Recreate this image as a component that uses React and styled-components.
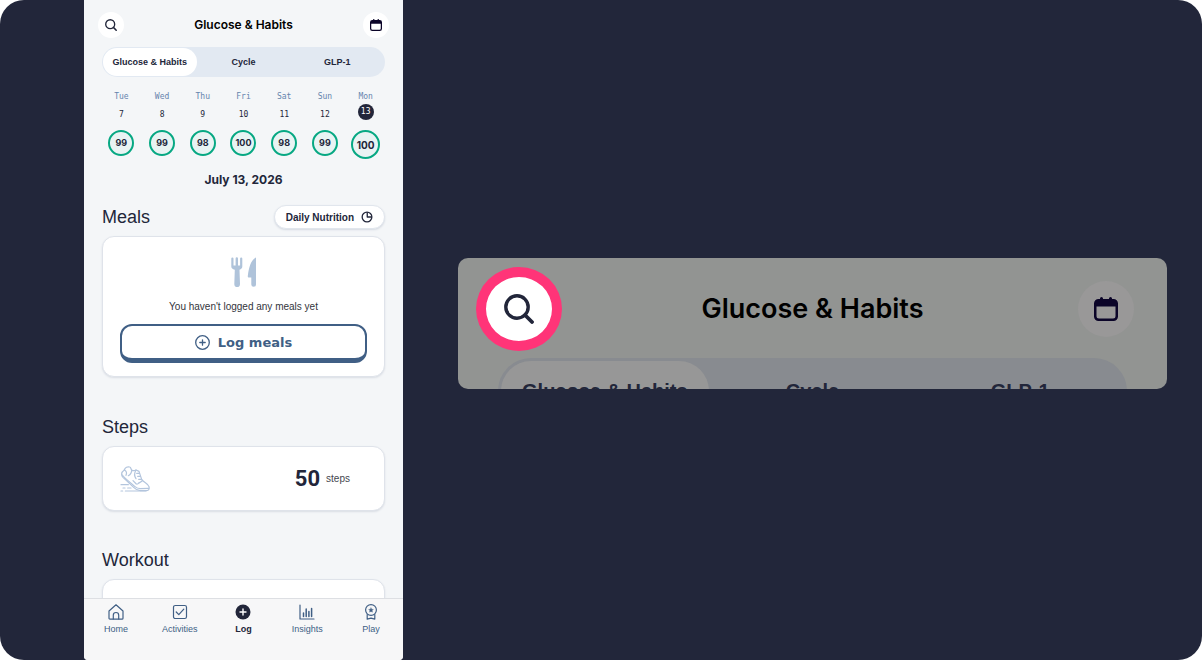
import { Fragment } from "react";
import styled, { createGlobalStyle } from "styled-components";

const GlobalStyle = createGlobalStyle`
  * {
    box-sizing: border-box;
  }
  body {
    margin: 0;
    background: #fff;
    font-family: "Liberation Sans", Arial, sans-serif;
    color: #22263a;
  }
  button {
    font: inherit;
    color: inherit;
    border: none;
    padding: 0;
    cursor: pointer;
  }
  h1, h2, p {
    margin: 0;
  }
  svg {
    display: block;
    flex: none;
  }
`;
const Stage = styled.main`
  display: grid;
  grid-template-columns: minmax(280px, 319px) 1fr;
  gap: 55px;
  height: 100vh;
  padding: 0 35px 0 84px;
  background: #22263a;
  border-radius: 24px;
  overflow: hidden;
`;
const Phone = styled.section`
  display: flex;
  flex-direction: column;
  min-height: 0;
  background: #f4f6f8;
  border-radius: 0 0 4px 4px;
  overflow: hidden;
`;
const Screen = styled.div`
  flex: 1;
  min-height: 0;
  overflow: hidden;
`;
const TopBar = styled.header`
  display: grid;
  grid-template-columns: 1fr auto 1fr;
  align-items: center;
  padding: ${(p) => (p.$large ? "9px 18px 0" : "12px 14px 9px")};
`;
const Title = styled.h1`
  font-family: Inter, sans-serif;
  font-size: ${(p) => (p.$large ? 27 : 12)}px;
  line-height: ${(p) => (p.$large ? 34 : 16)}px;
  font-weight: 600;
  color: #000;
`;
const RoundButton = styled.button`
  display: flex;
  align-items: center;
  justify-content: center;
  width: 26px;
  height: 26px;
  border-radius: 50%;
  background: #fff;
`;
const CalendarButton = styled(RoundButton)`
  justify-self: end;
  ${(p) =>
    p.$large &&
    `
    width: 56px;
    height: 56px;
    margin-right: 15px;
    background: #999898;
  `}
`;
const RingButton = styled(RoundButton)`
  width: 86px;
  height: 84px;
  border: 10px solid #ff3478;
`;
const Segments = styled.div`
  display: grid;
  grid-template-columns: repeat(3, 1fr);
  height: ${(p) => (p.$large ? 66 : 30)}px;
  margin: ${(p) => (p.$large ? "7px 40px 0" : "0 18px")};
  padding: ${(p) => (p.$large ? 3 : 1)}px;
  border-radius: 33px;
  background: ${(p) => (p.$large ? "#888b90" : "#e2e9f2")};
`;
const Segment = styled.button`
  border-radius: 33px;
  background: ${(p) => (p.$active ? (p.$large ? "#979797" : "#fff") : "transparent")};
  font-size: ${(p) => (p.$large ? 20 : 9)}px;
  font-weight: 700;
  white-space: nowrap;
`;
const Week = styled.div`
  display: grid;
  grid-template-columns: repeat(7, 1fr);
  padding: 15px 17px 0;
`;
const Day = styled.button`
  display: flex;
  flex-direction: column;
  align-items: center;
  height: 68px;
  background: none;
  font-family: "DejaVu Sans Mono", monospace;
  font-size: 8px;
  line-height: 10px;
`;
const DayName = styled.span`
  color: #6484ad;
`;
const DayNumber = styled.span`
  display: flex;
  align-items: center;
  justify-content: center;
  width: 16px;
  height: 16px;
  margin: ${(p) => (p.$active ? "2px 0 10px" : "5px 0 7px")};
  border-radius: 50%;
  color: ${(p) => (p.$active ? "#fff" : "#22263a")};
  background: ${(p) => (p.$active ? "#22263a" : "transparent")};
`;
const Score = styled.span`
  display: flex;
  align-items: center;
  justify-content: center;
  width: ${(p) => (p.$active ? 29 : 26)}px;
  height: ${(p) => (p.$active ? 29 : 26)}px;
  border: 2px solid #07a883;
  border-radius: 50%;
  background: #e9f3f3;
  font-family: Inter, sans-serif;
  font-size: ${(p) => (p.$active ? 10 : 9)}px;
  font-weight: 700;
`;
const DateLine = styled.p`
  margin-top: 12px;
  text-align: center;
  font-family: Inter, sans-serif;
  font-size: 12px;
  line-height: 16px;
  font-weight: 700;
`;
const Section = styled.section`
  padding: 0 18px;
  margin-top: ${(p) => p.$top}px;
`;
const SectionHead = styled.div`
  display: flex;
  align-items: center;
  justify-content: space-between;
  height: 24px;
  margin-bottom: 7px;
`;
const Heading = styled.h2`
  font-size: 18px;
  line-height: 24px;
  font-weight: 400;
`;
const Pill = styled.button`
  display: flex;
  align-items: center;
  gap: 7px;
  height: 24px;
  padding: 0 11px;
  border: 1px solid #e1e6ed;
  border-radius: 12px;
  background: #fff;
  box-shadow: 0 1px 2px #d5dae2;
  font-size: 10px;
  font-weight: 700;
`;
const Card = styled.div`
  border: 1px solid #dfe3ea;
  border-radius: 12px;
  background: #fff;
  box-shadow: 0 1px 2px #d9dde4;
`;
const MealsCard = styled(Card)`
  display: flex;
  flex-direction: column;
  align-items: center;
  padding: 20px 17px 13px;
`;
const StepsCard = styled(Card)`
  display: flex;
  align-items: center;
  height: 65px;
  padding: 0 34px 0 17px;
`;
const WorkoutCard = styled(Card)`
  height: 65px;
`;
const Note = styled.p`
  margin: 13px 0 10px;
  font-size: 10px;
  line-height: 14px;
  color: #33353c;
`;
const LogButton = styled.button`
  display: flex;
  align-items: center;
  justify-content: center;
  gap: 8px;
  width: 100%;
  height: 39px;
  border: 2px solid #405f85;
  border-bottom-width: 5px;
  border-radius: 12px;
  background: #fff;
  color: #405f85;
  font-family: "DejaVu Sans", sans-serif;
  font-size: 13px;
  font-weight: 700;
`;
const StepCount = styled.strong`
  margin-left: auto;
  font-family: Roboto, sans-serif;
  font-size: 22px;
  line-height: 28px;
`;
const StepUnit = styled.span`
  margin-left: 6px;
  font-size: 10px;
  color: #44464e;
`;
const TabBar = styled.nav`
  display: grid;
  grid-template-columns: repeat(5, 1fr);
  height: 62px;
  border-top: 1px solid #dddfe3;
  background: #f7f7f8;
`;
const Tab = styled.a`
  display: flex;
  flex-direction: column;
  align-items: center;
  gap: 4px;
  padding-top: 5px;
  color: ${(p) => (p.$active ? "#22263a" : "#405f85")};
  font-size: 9px;
  line-height: 10px;
  font-weight: ${(p) => (p.$active ? 700 : 400)};
  text-decoration: none;
`;
const CloseUp = styled.section`
  align-self: center;
  height: 131px;
  margin-bottom: 13px;
  border-radius: 10px;
  background: #929492;
  overflow: hidden;
`;

const SearchIcon = ({ size }) => (
  <svg width={size} height={size} viewBox="0 0 30 30" fill="none" stroke="#22263a" strokeWidth="3.4">
    <circle cx="13" cy="13" r="11.2" />
    <path d="M21 21l7 7" strokeWidth="3.8" strokeLinecap="round" />
  </svg>
);
const CalendarIcon = ({ size }) => (
  <svg width={size} height={size} viewBox="0 0 24 24" fill="#0b0428">
    <path
      fillRule="evenodd"
      d="M6 1.5a1.5 1.5 0 0 1 3 0V2h6v-.5a1.5 1.5 0 0 1 3 0V2h1.5A4.5 4.5 0 0 1 24 6.5v13a4.5 4.5 0 0 1-4.5 4.5h-15A4.5 4.5 0 0 1 0 19.5v-13A4.5 4.5 0 0 1 4.5 2H6zM2.500 9.500V19a2.500 2.500 0 0 0 2.500 2.500h14a2.500 2.500 0 0 0 2.500-2.500V9.500z"
    />
  </svg>
);
const PieIcon = () => (
  <svg width="12" height="12" viewBox="0 0 24 24" fill="none" stroke="#22263a" strokeWidth="2.6" strokeLinejoin="round">
    <circle cx="12" cy="12" r="9.7" />
    <path d="M12.500 2.500V12h9" />
  </svg>
);
const CutleryIcon = () => (
  <svg width="26" height="30" viewBox="0 0 26 30" fill="#afc3da">
    <path d="M.3 1.500a1.100 1.100 0 0 1 2.200 0V8.500h2.100V1.500a1.200 1.200 0 0 1 2.400 0V8.500h2.100V1.500a1.100 1.100 0 0 1 2.200 0V9.500c0 1.800-1.200 2.700-2.800 3.200L9 27.300a2.600 2.600 0 0 1-5.700 0l.5-14.600C1.600 12.200.3 11.300.3 9.500z" />
    <path d="M25 1v26.400a2.300 2.300 0 0 1-4.700 0V20.500H18c-1 0-1.400-.6-1.200-1.500C17.600 12 19.500 3 25 .5z" />
  </svg>
);
const PlusIcon = () => (
  <svg width="15" height="15" viewBox="0 0 15 15" fill="none" stroke="#405f85" strokeWidth="1.3" strokeLinecap="round">
    <circle cx="7.5" cy="7.5" r="6.8" />
    <path d="M7.500 4.800v5.400M4.800 7.500h5.400" />
  </svg>
);
const ShoeIcon = () => (
  <svg width="30" height="26" viewBox="0 0 88 78" fill="none" stroke="#b3c5dd" strokeWidth="3.6" strokeLinecap="round" strokeLinejoin="round">
    <path d="M4 26c-1-6 2-10 8-14 2-8 10-11 16-9 4 1 3 6 6 9 4 4 9 2 13 0l9 4 8 24c6 10 20 12 22 22 2 10-2 12-10 12H60c-10 0-14-4-20-10L8 34c-3-3-4-5-4-8z" />
    <path d="M6 27c4 7 24 23 38 35 6 5 10 6 16 6l25-1M12 12c6 3 8 9 5 16M34 12c0 8-4 14-10 17M47 12c-5 8-7 16 0 26M57 22h-8M60 31h-8M63 40h-8M38 44l10 10M52 54c4-6 10-4 14-10" />
    <path d="M2 56h22M8 66h6M22 66h10M2 75h5M15 75h62" />
  </svg>
);

const tabIcons = {
  Home: (
    <>
      <path d="M1 7L8 .8 15 7v7.200a1 1 0 0 1-1 1H2a1 1 0 0 1-1-1z" />
      <path d="M5.300 15v-3.800a2.700 2.700 0 0 1 5.400 0V15" />
    </>
  ),
  Activities: (
    <>
      <rect x="1.5" y="1.500" width="13" height="13" rx="1.800" />
      <path d="M4.200 8l2.600 2.700 5-5.600" />
    </>
  ),
  Log: (
    <>
      <circle cx="8" cy="8" r="7.5" fill="#22263a" stroke="none" />
      <path d="M8 5v6M5 8h6" stroke="#fff" strokeWidth="1.4" />
    </>
  ),
  Insights: (
    <>
      <path d="M1 1v14h14" />
      <path d="M4.500 9v3.500M7.200 5v7.500M9.900 7.500v5M12.600 4.500v8" strokeWidth="1.5" />
    </>
  ),
  Play: (
    <>
      <circle cx="8" cy="6" r="5.400" />
      <path d="M4.200 10.500v4.700L8 14.200l3.800 1v-4.700" />
      <path d="M8 3.700l.7 1.500 1.700.2-1.200 1.200.3 1.600L8 7.400l-1.500.8.3-1.600-1.200-1.200 1.700-.2z" fill="#405f85" strokeWidth=".3" />
    </>
  ),
};
const days = [
  ["Tue", 7, 99],
  ["Wed", 8, 99],
  ["Thu", 9, 98],
  ["Fri", 10, 100],
  ["Sat", 11, 98],
  ["Sun", 12, 99],
  ["Mon", 13, 100],
];

const SegmentControl = ({ large }) => (
  <Segments $large={large}>
    {["Glucose & Habits", "Cycle", "GLP-1"].map((label, i) => (
      <Segment key={label} type="button" $large={large} $active={i === 0}>
        {label}
      </Segment>
    ))}
  </Segments>
);

export default function App() {
  return (
    <Fragment>
      <GlobalStyle />
      <Stage>
        <Phone>
          <Screen>
            <TopBar>
              <RoundButton type="button" aria-label="Search">
                <SearchIcon size={12} />
              </RoundButton>
              <Title>Glucose &amp; Habits</Title>
              <CalendarButton type="button" aria-label="Calendar">
                <CalendarIcon size={12} />
              </CalendarButton>
            </TopBar>
            <SegmentControl />
            <Week>
              {days.map(([name, number, score]) => {
                const active = number === 13;
                return (
                  <Day key={name} type="button">
                    <DayName>{name}</DayName>
                    <DayNumber $active={active}>{number}</DayNumber>
                    <Score $active={active}>{score}</Score>
                  </Day>
                );
              })}
            </Week>
            <DateLine>July 13, 2026</DateLine>
            <Section $top={17}>
              <SectionHead>
                <Heading>Meals</Heading>
                <Pill type="button">
                  Daily Nutrition
                  <PieIcon />
                </Pill>
              </SectionHead>
              <MealsCard>
                <CutleryIcon />
                <Note>You haven't logged any meals yet</Note>
                <LogButton type="button">
                  <PlusIcon />
                  Log meals
                </LogButton>
              </MealsCard>
            </Section>
            <Section $top={38}>
              <SectionHead>
                <Heading>Steps</Heading>
              </SectionHead>
              <StepsCard>
                <ShoeIcon />
                <StepCount>50</StepCount>
                <StepUnit>steps</StepUnit>
              </StepsCard>
            </Section>
            <Section $top={37}>
              <SectionHead>
                <Heading>Workout</Heading>
              </SectionHead>
              <WorkoutCard />
            </Section>
          </Screen>
          <TabBar>
            {Object.keys(tabIcons).map((name) => (
              <Tab key={name} href="#" $active={name === "Log"}>
                <svg width="16" height="16" viewBox="0 0 16 16" fill="none" stroke="currentColor" strokeWidth="1.2" strokeLinecap="round" strokeLinejoin="round">
                  {tabIcons[name]}
                </svg>
                {name}
              </Tab>
            ))}
          </TabBar>
        </Phone>
        <CloseUp>
          <TopBar $large>
            <RingButton type="button" aria-label="Search">
              <SearchIcon size={30} />
            </RingButton>
            <Title as="h2" $large>
              Glucose &amp; Habits
            </Title>
            <CalendarButton type="button" aria-label="Calendar" $large>
              <CalendarIcon size={24} />
            </CalendarButton>
          </TopBar>
          <SegmentControl large />
        </CloseUp>
      </Stage>
    </Fragment>
  );
}
